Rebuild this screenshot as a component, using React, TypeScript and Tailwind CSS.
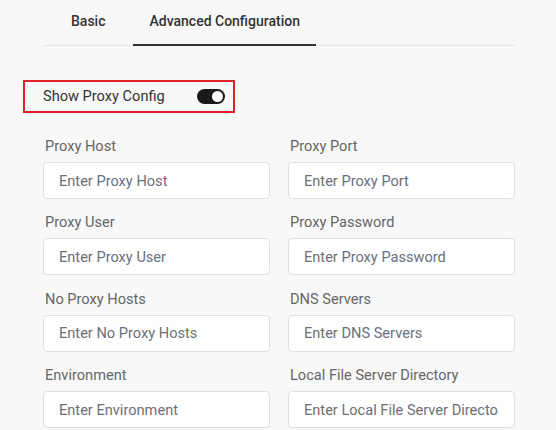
import React from "react";

const fields: [string, string][] = [
  ["Proxy Host", "Enter Proxy Host"],
  ["Proxy Port", "Enter Proxy Port"],
  ["Proxy User", "Enter Proxy User"],
  ["Proxy Password", "Enter Proxy Password"],
  ["No Proxy Hosts", "Enter No Proxy Hosts"],
  ["DNS Servers", "Enter DNS Servers"],
  ["Environment", "Enter Environment"],
  ["Local File Server Directory", "Enter Local File Server Directory"],
];

export default function App() {
  return (
    <div
      className="w-[556px] h-[430px] overflow-hidden bg-[#f8f8f8] pl-[43px] pr-[41px]"
      style={{ fontFamily: "Roboto, 'Liberation Sans', sans-serif" }}
    >
      <div className="flex gap-3 pl-3 border-b border-[#e6e6e6] h-[46px]">
        <div className="px-4 text-[14px] font-medium text-[#333] leading-[42px] h-[46px]">Basic</div>
        <div className="px-4 text-[14px] font-medium text-[#333] leading-[42px] h-[46px] border-b-2 border-[#333]">
          Advanced Configuration
        </div>
      </div>
      <div className="mt-[34px] ml-[-20px] w-[212px] h-[33px] border-2 border-[#e3202a] flex items-center justify-between pl-[18px] pr-[8px]">
        <span className="text-[14.6px] text-[#333]">Show Proxy Config</span>
        <div className="w-[28px] h-[15px] rounded-full bg-[#1a1a1a] flex items-center justify-end pr-[2px]">
          <div className="w-[11px] h-[11px] rounded-full bg-white" />
        </div>
      </div>
      <div className="grid grid-cols-2 gap-x-[18px] gap-y-[13.4px] mt-[23px]">
        {fields.map(([label, ph]) => (
          <div key={label} className="flex flex-col">
            <label className="text-[14.6px] leading-[20px] text-[#666] pl-[2px] mb-[6px]">{label}</label>
            <input
              placeholder={ph}
              className="h-[37px] w-full rounded-[4px] border border-[#e0e0e0] bg-white px-[15px] text-[14.6px] placeholder:text-[#6b6f7b] outline-none"
              style={{ fontFamily: "Roboto, 'Liberation Sans', sans-serif" }}
            />
          </div>
        ))}
      </div>
    </div>
  );
}
